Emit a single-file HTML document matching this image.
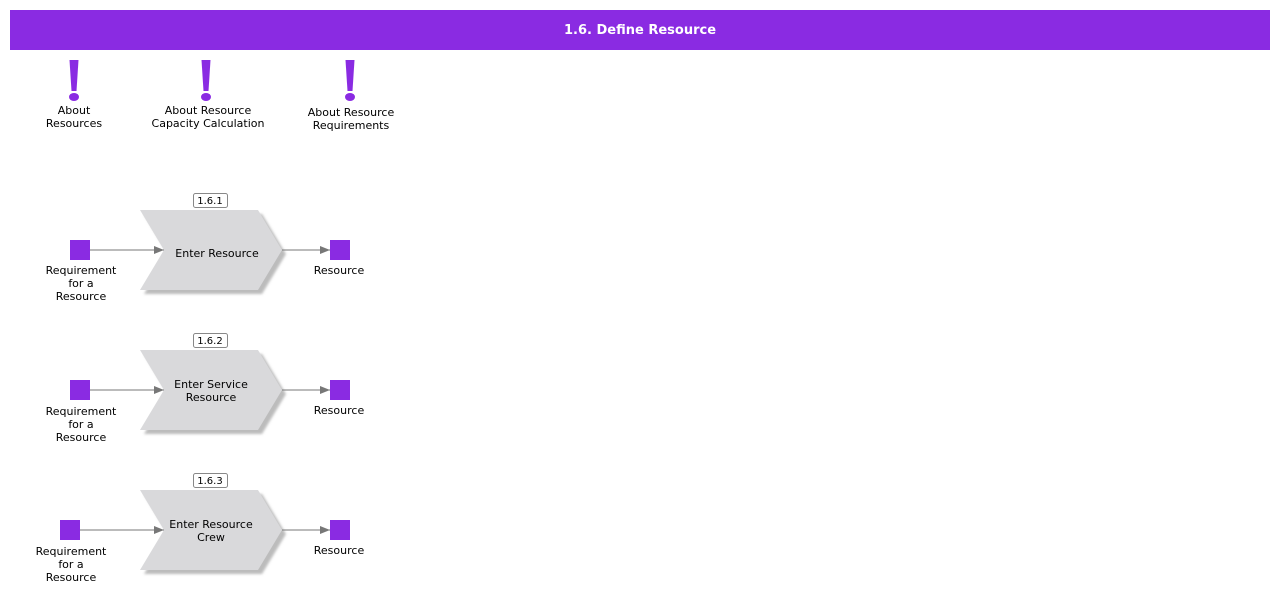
<!DOCTYPE html>
<html><head><style>
body{margin:0;width:1280px;height:602px;background:#fff;overflow:hidden;font-family:"DejaVu Sans","Liberation Sans",sans-serif}
.hdr{position:absolute;left:10px;top:10px;width:1260px;height:40px;background:#8a2be2;color:#fff;font:bold 13px "DejaVu Sans",sans-serif;text-align:center;line-height:42px}
svg{position:absolute;left:0;top:0}
text{font-family:"DejaVu Sans","Liberation Sans",sans-serif;font-size:11px;fill:#000}
</style></head><body>
<div class="hdr">1.6. Define Resource</div>
<svg width="1280" height="602">
<defs>
<filter id="bl" x="-10%" y="-10%" width="120%" height="120%"><feGaussianBlur stdDeviation="1.2"/></filter>
<g id="ex"><polygon points="-4.5,0 4.5,0 2.5,31 -2.5,31" fill="#8a2be2"/><ellipse cx="0" cy="37" rx="5" ry="4" fill="#8a2be2"/></g>
<marker id="ar" markerWidth="10" markerHeight="8" refX="10" refY="4" orient="auto" markerUnits="userSpaceOnUse"><polygon points="0,0 10,4 0,8" fill="#777"/></marker>
<g id="chev">
<polygon points="144,214 262,214 286,254 262,294 144,294 168,254" fill="#bcbcbc" filter="url(#bl)"/>
<polygon points="140,210 258,210 282,250 258,290 140,290 164,250" fill="#d9d9db"/>
</g>
</defs>
<use href="#ex" x="74" y="60"/><use href="#ex" x="206" y="60"/><use href="#ex" x="350" y="60"/>
<g text-anchor="middle">
<text x="74" y="114">About</text><text x="74" y="127">Resources</text>
<text x="208" y="114">About Resource</text><text x="208" y="127">Capacity Calculation</text>
<text x="351" y="116">About Resource</text><text x="351" y="129">Requirements</text>
</g>
<g>
<rect x="193.5" y="193.5" width="34" height="14" rx="2" fill="#fff" stroke="#888"/>
<text x="210" y="204" text-anchor="middle" style="font-size:10px">1.6.1</text>
<use href="#chev"/>
<rect x="70" y="240" width="20" height="20" fill="#8a2be2"/>
<rect x="330" y="240" width="20" height="20" fill="#8a2be2"/>
<line x1="90" y1="250" x2="164" y2="250" stroke="#777" marker-end="url(#ar)"/>
<line x1="282" y1="250" x2="330" y2="250" stroke="#777" marker-end="url(#ar)"/>
<text x="339" y="274" text-anchor="middle">Resource</text>
<text x="217" y="257" text-anchor="middle">Enter Resource</text>
<g text-anchor="middle"><text x="81" y="274">Requirement</text><text x="81" y="287">for a</text><text x="81" y="300">Resource</text></g>
</g>
<g transform="translate(0,140)">
<rect x="193.5" y="193.5" width="34" height="14" rx="2" fill="#fff" stroke="#888"/>
<text x="210" y="204" text-anchor="middle" style="font-size:10px">1.6.2</text>
<use href="#chev"/>
<rect x="70" y="240" width="20" height="20" fill="#8a2be2"/>
<rect x="330" y="240" width="20" height="20" fill="#8a2be2"/>
<line x1="90" y1="250" x2="164" y2="250" stroke="#777" marker-end="url(#ar)"/>
<line x1="282" y1="250" x2="330" y2="250" stroke="#777" marker-end="url(#ar)"/>
<text x="339" y="274" text-anchor="middle">Resource</text>
<text x="211" y="248" text-anchor="middle">Enter Service</text><text x="211" y="261" text-anchor="middle">Resource</text>
<g text-anchor="middle"><text x="81" y="275">Requirement</text><text x="81" y="288">for a</text><text x="81" y="301">Resource</text></g>
</g>
<g transform="translate(0,280)">
<rect x="193.5" y="193.5" width="34" height="14" rx="2" fill="#fff" stroke="#888"/>
<text x="210" y="204" text-anchor="middle" style="font-size:10px">1.6.3</text>
<use href="#chev"/>
<rect x="60" y="240" width="20" height="20" fill="#8a2be2"/>
<rect x="330" y="240" width="20" height="20" fill="#8a2be2"/>
<line x1="80" y1="250" x2="164" y2="250" stroke="#777" marker-end="url(#ar)"/>
<line x1="282" y1="250" x2="330" y2="250" stroke="#777" marker-end="url(#ar)"/>
<text x="339" y="274" text-anchor="middle">Resource</text>
<text x="211" y="248" text-anchor="middle">Enter Resource</text><text x="211" y="261" text-anchor="middle">Crew</text>
<g text-anchor="middle"><text x="71" y="275">Requirement</text><text x="71" y="288">for a</text><text x="71" y="301">Resource</text></g>
</g>
</svg>
</body></html>
